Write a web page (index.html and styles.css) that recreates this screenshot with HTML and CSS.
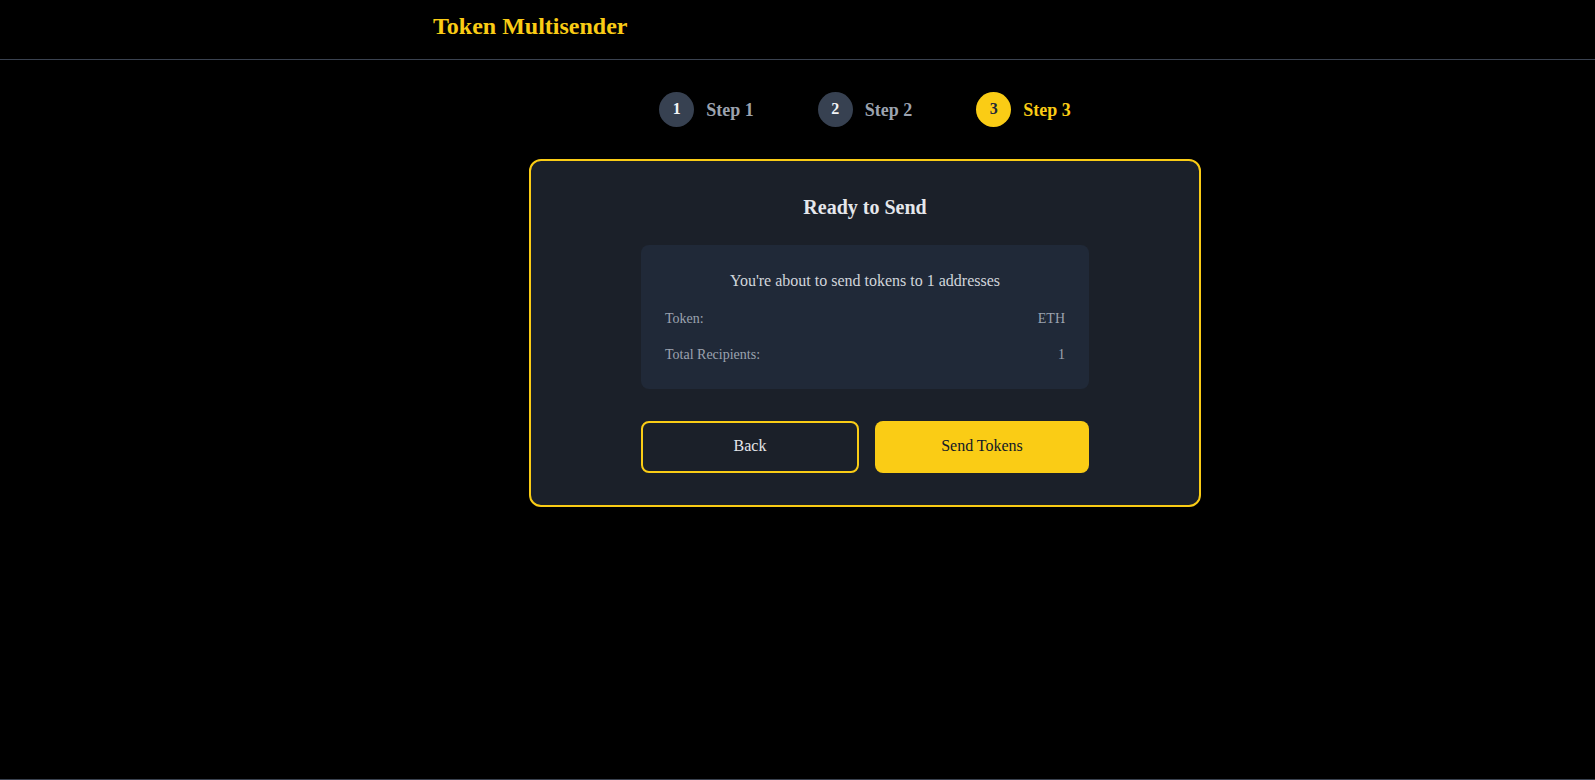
FILE: index.html
```html
<!DOCTYPE html>
<html lang="en">
<head>
<meta charset="utf-8">
<title>Token Multisender</title>
<link rel="stylesheet" href="styles.css">
</head>
<body>
<div class="page">
  <header class="header">
    <h1 class="brand">Token Multisender</h1>
  </header>
  <main class="main">
    <ol class="steps">
      <li class="step"><span class="step-num">1</span><span class="step-label">Step 1</span></li>
      <li class="step"><span class="step-num">2</span><span class="step-label">Step 2</span></li>
      <li class="step active"><span class="step-num">3</span><span class="step-label">Step 3</span></li>
    </ol>
    <section class="card">
      <h2 class="card-title">Ready to Send</h2>
      <div class="summary">
        <p class="summary-lead">You're about to send tokens to 1 addresses</p>
        <div class="summary-row"><span>Token:</span><span>ETH</span></div>
        <div class="summary-row"><span>Total Recipients:</span><span>1</span></div>
      </div>
      <div class="actions">
        <button class="btn btn-back" type="button">Back</button>
        <button class="btn btn-send" type="button">Send Tokens</button>
      </div>
    </section>
  </main>
</div>
<footer class="footer"></footer>
</body>
</html>
```

FILE: styles.css
```css
* { box-sizing: border-box; }

html, body {
  margin: 0;
  padding: 0;
  background: #000;
  font-family: "Liberation Serif", "Times New Roman", serif;
}

.page {
  min-height: 779px;
}

.header {
  height: 60px;
  border-bottom: 1px solid #3a4250;
  padding: 10px 0 0 433px;
}

.brand {
  margin: 0;
  font-size: 24px;
  line-height: 32px;
  font-weight: 700;
  color: #facc15;
}

.main {
  padding: 32px 0 0 135px;
  display: flex;
  flex-direction: column;
  align-items: center;
}

.steps {
  list-style: none;
  margin: 0 0 32px;
  padding: 0;
  display: flex;
  gap: 64px;
}

.step {
  display: flex;
  align-items: center;
  gap: 12px;
}

.step-num {
  width: 35px;
  height: 35px;
  border-radius: 50%;
  background: #374151;
  color: #f3f4f6;
  font-weight: 700;
  font-size: 16px;
  display: flex;
  align-items: center;
  justify-content: center;
  padding-bottom: 2px;
}

.step-label {
  font-size: 18px;
  font-weight: 700;
  color: #9ca3af;
  padding-top: 2px;
}

.step.active .step-num {
  background: #facc15;
  color: #1f2937;
}

.step.active .step-label {
  color: #facc15;
}

.card {
  width: 672px;
  background: #1b2029;
  border: 2px solid #facc15;
  border-radius: 12px;
  padding: 32px 0 32px;
  display: flex;
  flex-direction: column;
  align-items: center;
}

.card-title {
  margin: 0 0 24px;
  font-size: 20px;
  line-height: 28px;
  font-weight: 700;
  color: #e5e7eb;
}

.summary {
  width: 448px;
  background: #202938;
  border-radius: 8px;
  padding: 26px 24px 16px;
}

.summary-lead {
  margin: 0 0 10px;
  text-align: center;
  font-size: 16px;
  line-height: 20px;
  color: #d1d5db;
}

.summary-row {
  display: flex;
  justify-content: space-between;
  padding: 8px 0;
  font-size: 14px;
  line-height: 20px;
  color: #9ca3af;
}

.actions {
  width: 448px;
  margin-top: 32px;
  display: flex;
  gap: 16px;
}

.btn {
  height: 52px;
  border-radius: 8px;
  font-family: "Liberation Serif", "Times New Roman", serif;
  font-size: 16px;
  padding: 0 0 2px;
  cursor: pointer;
}

.btn-back {
  flex: 0 0 218px;
  background: transparent;
  border: 2px solid #facc15;
  color: #e5e7eb;
}

.btn-send {
  flex: 1;
  background: #facc15;
  border: none;
  color: #111827;
}

.footer {
  border-top: 1px solid #3a4250;
  height: 40px;
}
```
